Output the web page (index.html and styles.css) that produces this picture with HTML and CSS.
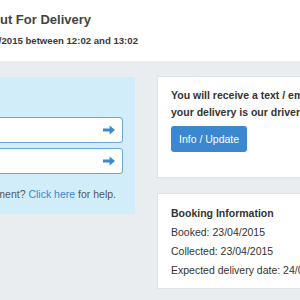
FILE: index.html
```html
<!DOCTYPE html>
<html lang="en">
<head>
  <meta charset="UTF-8" />
  <title>Track Delivery</title>
  <meta name="viewport" content="width=device-width, initial-scale=1">
  <link rel="stylesheet" href="styles.css">
</head>
<body>
  <header class="status-header">
    <h1 class="status-title"><span>Your parcel is Out For Delivery</span></h1>
    <p class="status-eta"><span>Estimated delivery 24/04/2015 between 12:02 and 13:02</span></p>
  </header>

  <main class="status-main">
    <section class="track-panel">
      <form class="track-form">
        <div class="track-field">
          <input type="text" class="track-input">
          <button type="button" class="track-go">
            <svg width="12" height="10" viewBox="0 0 12 10"><path d="M0 3.6h6.6V0.4L12 5l-5.4 4.6V6.4H0z" fill="#3b87d0"/></svg>
          </button>
        </div>
        <div class="track-field">
          <input type="text" class="track-input">
          <button type="button" class="track-go">
            <svg width="12" height="10" viewBox="0 0 12 10"><path d="M0 3.6h6.6V0.4L12 5l-5.4 4.6V6.4H0z" fill="#3b87d0"/></svg>
          </button>
        </div>
      </form>
      <p class="track-help"><span>Having problems finding your consignment? <a href="#">Click here</a> for help.</span></p>
    </section>

    <div class="status-side">
      <div class="card">
        <p class="card-note">You will receive a text / email when<br>your delivery is our driver's next stop.</p>
        <button type="button" class="btn-info">Info / Update</button>
      </div>
      <div class="card booking">
        <h2 class="booking-title">Booking Information</h2>
        <p>Booked: 23/04/2015</p>
        <p>Collected: 23/04/2015</p>
        <p>Expected delivery date: 24/04/2015</p>
      </div>
    </div>
  </main>
</body>
</html>
```

FILE: styles.css
```css
:root {
  --bg-gray: #e9edf0;
  --panel-blue: #d2edfa;
  --brand-blue: #3b87d0;
  --field-border: #6aa7dc;
  --text: #333333;
  --card-border: #dfe3e7;
}
* { box-sizing: border-box; margin: 0; padding: 0; }
html, body { width: 300px; height: 300px; overflow: hidden; }
body {
  background: var(--bg-gray); color: var(--text);
  font-family: 'Liberation Sans', Arial, sans-serif;
  font-size: 10.5px;
}

/* header band */
.status-header {
  background: #fff; height: 61px; padding-top: 10px;
}
.status-title, .status-eta, .track-help {
  display: flex; justify-content: flex-end; white-space: nowrap;
}
.status-title {
  width: 91px; font-size: 13px; line-height: 19px; font-weight: 700; color: #444;
}
.status-eta {
  width: 138px; margin-top: 5px; font-size: 9.6px; line-height: 14px;
  font-weight: 700; color: #3a3a3a;
}

/* main area */
.status-main {
  display: flex; gap: 22px; padding-top: 15px;
}
.track-panel {
  flex: 0 0 135px; min-width: 0; width: 135px; margin-top: 1px; height: 137px;
  background: var(--panel-blue); padding: 40px 12px 11px 0;
}
.track-form {
  display: flex; flex-direction: column; gap: 5px;
}
.track-field {
  display: flex; align-items: center; height: 26px; margin-left: -60px;
  background: #fff; border: 1px solid var(--field-border); border-radius: 3px;
}
.track-input {
  flex: 1; width: 0; min-width: 0; border: none; outline: none; background: transparent; height: 100%;
}
.track-go {
  background: none; border: none; padding: 0 7px 0 4px; display: flex; align-items: center;
}
.track-help {
  width: 116px; margin-top: 12px; line-height: 16px; color: #555;
}
.track-help a { color: var(--brand-blue); text-decoration: none; }

.status-side {
  flex: 0 0 250px; min-width: 0; display: flex; flex-direction: column; gap: 15px;
}
.card {
  background: #fff; border: 1px solid var(--card-border);
  padding: 10px 13px 25px; white-space: nowrap;
}
.card-note {
  font-weight: 700; line-height: 17px; color: #333;
}
.btn-info {
  margin-top: 5px; height: 26px; padding: 0 8px;
  background: var(--brand-blue); color: #fff; border: none; border-radius: 3px;
  font-family: inherit; font-size: 10.5px;
}
.booking { padding-bottom: 8px; }
.booking-title, .booking p {
  font-size: 10.5px; line-height: 19px;
}
.booking-title { font-weight: 700; }
```
